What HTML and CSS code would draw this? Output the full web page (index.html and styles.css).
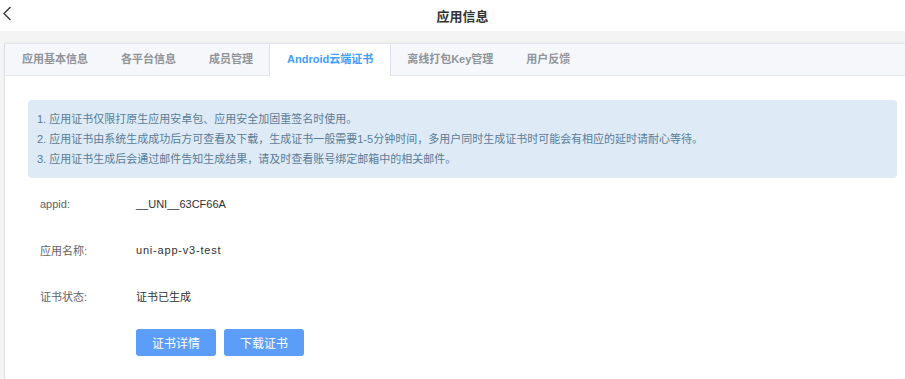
FILE: index.html
```html
<!DOCTYPE html>
<html lang="zh-CN">
<head>
  <meta charset="UTF-8">
  <title>应用信息</title>
  <link rel="stylesheet" href="styles.css">
</head>
<body>
  <!-- Top navigation bar -->
  <div class="topbar">
    <a class="back" href="#">
      <svg width="10" height="15" viewBox="0 0 10 15"><path d="M8.5 1 L2 7.5 L8.5 14" fill="none" stroke="#333" stroke-width="1.3"/></svg>
    </a>
    <div class="title">应用信息</div>
    <span></span>
  </div>

  <div class="page">
    <div class="card">
      <div class="tabs">
        <div class="tab">应用基本信息</div>
        <div class="tab">各平台信息</div>
        <div class="tab">成员管理</div>
        <div class="tab active">Android云端证书</div>
        <div class="tab">离线打包Key管理</div>
        <div class="tab">用户反馈</div>
      </div>

      <div class="content">
        <div class="notice">
          <p>1. 应用证书仅限打原生应用安卓包、应用安全加固重签名时使用。</p>
          <p>2. 应用证书由系统生成成功后方可查看及下载，生成证书一般需要1-5分钟时间，多用户同时生成证书时可能会有相应的延时请耐心等待。</p>
          <p>3. 应用证书生成后会通过邮件告知生成结果，请及时查看账号绑定邮箱中的相关邮件。</p>
        </div>

        <div class="form">
          <div class="row">
            <div class="label">appid:</div>
            <div class="value">__UNI__63CF66A</div>
          </div>
          <div class="row">
            <div class="label">应用名称:</div>
            <div class="value wide">uni-app-v3-test</div>
          </div>
          <div class="row">
            <div class="label">证书状态:</div>
            <div class="value">证书已生成</div>
          </div>
          <div class="actions">
            <button class="btn">证书详情</button>
            <button class="btn">下载证书</button>
          </div>
        </div>
      </div>
    </div>
  </div>
</body>
</html>
```

FILE: styles.css
```css
* {
  margin: 0;
  padding: 0;
  box-sizing: border-box;
}
html, body {
  height: 100%;
  overflow: hidden;
}
body {
  background: #f4f4f4;
  font-family: "Liberation Sans", "Noto Sans CJK SC", sans-serif;
  color: #303133;
}
/* Header */
.topbar {
  height: 31px;
  background: #fff;
  display: grid;
  grid-template-columns: 40px 1fr 20px;
  align-items: center;
}
.back {
  display: flex;
  padding-left: 2px;
  margin-top: -5px;
}
.title {
  text-align: center;
  font-size: 13px;
  font-weight: bold;
  color: #333;
}
/* Card with tabs */
.page {
  padding: 12px 0 0 4px;
  height: calc(100% - 31px);
}
.card {
  background: #fff;
  border-left: 1px solid #dcdfe6;
  border-top: 1px solid #e4e7ed;
  height: 100%;
  box-shadow: 0 -1px 2px rgba(0, 0, 0, 0.04);
}
.tabs {
  display: flex;
  height: 32px;
  background: #f5f7fa;
  border-bottom: 1px solid #e4e7ed;
}
.tab {
  padding: 0 16px;
  line-height: 31px;
  font-size: 11px;
  font-weight: bold;
  color: #909399;
  border-left: 1px solid transparent;
  border-right: 1px solid transparent;
  margin-left: -1px;
}
.tab:first-child {
  margin-left: 0;
}
.tab.active {
  background: #fff;
  color: #409eff;
  border-left-color: #dcdfe6;
  border-right-color: #dcdfe6;
  height: 32px;
  padding: 0 17px 0 17px;
}
/* Content */
.content {
  padding: 24px 8px 0 23px;
}
.notice {
  background: #deebf7;
  border-radius: 4px;
  padding: 9px 9px;
  font-size: 11px;
  line-height: 20px;
  color: #5a7b96;
}
.form {
  padding: 3px 0 0 12px;
}
.row {
  display: flex;
  align-items: center;
  height: 46px;
  font-size: 11px;
}
.label {
  width: 96px;
  color: #606266;
}
.value {
  color: #303133;
}
.value.wide {
  letter-spacing: 0.8px;
}
.actions {
  display: flex;
  gap: 8px;
  margin: 10px 0 0 96px;
}
.btn {
  width: 80px;
  height: 27px;
  border: none;
  border-radius: 3px;
  background: #5c9ef7;
  color: #fff;
  font-family: inherit;
  font-size: 12px;
  cursor: pointer;
}
```
